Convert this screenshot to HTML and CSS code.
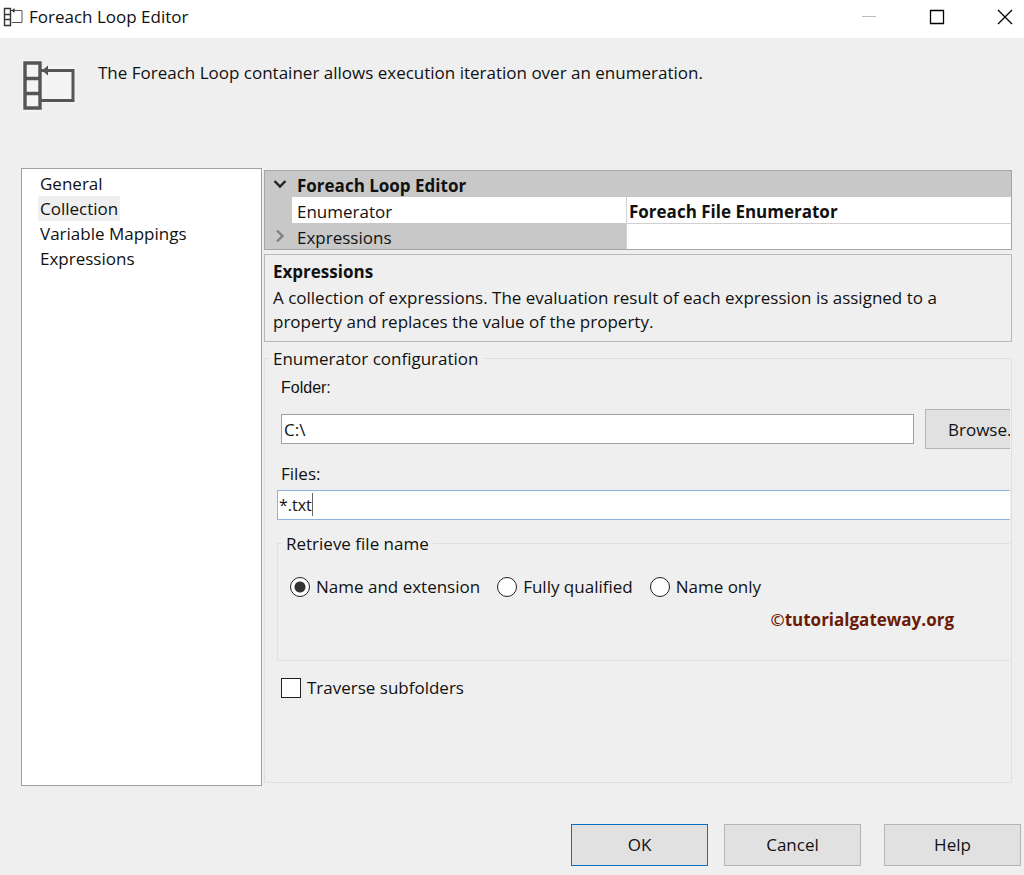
FILE: index.html
```
<!DOCTYPE html>
<html lang="en">
<head>
    <meta charset="utf-8">
    <title>Foreach Loop Editor</title>
    <link rel="stylesheet" href="styles.css">
</head>
<body>
    <div class="titlebar">
        <svg class="title-icon" width="20" height="20" viewBox="0 0 20 20" fill="none" stroke="#333">
            <path d="M1.5 1.5h6v17h-6zM1.5 7.5h6M1.5 12.5h6" stroke-width="1.4"/>
            <path d="M8 3.500h11v12H9" stroke="#555"/>
            <path d="M8.500 3.500l3-2.500v5z" fill="#333" stroke="none"/>
        </svg>
        <h1>Foreach Loop Editor</h1>
        <div class="window-buttons">
            <button type="button" aria-label="Minimize" disabled>
                <svg width="16" height="16" viewBox="0 0 16 16" stroke="#bbb"><path d="M1 7.5h14"/></svg>
            </button>
            <button type="button" aria-label="Maximize">
                <svg width="16" height="16" viewBox="0 0 16 16" fill="none" stroke="#000"><path d="M1.5 1.5h13v13h-13z" stroke-width="1.3"/></svg>
            </button>
            <button type="button" aria-label="Close">
                <svg width="16" height="16" viewBox="0 0 16 16" stroke="#000"><path d="M1 1l14 14M15 1L1 15" stroke-width="1.3"/></svg>
            </button>
        </div>
    </div>

    <div class="intro">
        <svg width="54" height="52" viewBox="0 0 54 52" fill="none" stroke="#555" stroke-width="3">
            <path d="M0 0h20v6h34v37H20v9H0z" fill="#f4f4f4" stroke="none"/>
            <path d="M3 3h15v45H3zM3 18.500h15M3 33.500h15" stroke-width="3.4"/>
            <path d="M18 10.500h33v30H18"/>
            <path d="M20 10.500l6-5v10z" fill="#555" stroke="none"/>
        </svg>
        <p>The Foreach Loop container allows execution iteration over an enumeration.</p>
    </div>

    <div class="main">
        <ul class="pages">
            <li><a href="#">General</a></li>
            <li><a href="#" class="selected">Collection</a></li>
            <li><a href="#">Variable Mappings</a></li>
            <li><a href="#">Expressions</a></li>
        </ul>

        <div class="content">
            <table class="properties">
                <colgroup>
                    <col class="col-gutter">
                    <col class="col-name">
                    <col>
                </colgroup>
                <tr class="category">
                    <td class="gutter">
                        <svg width="14" height="10" viewBox="0 0 14 10" fill="none" stroke="#222" stroke-width="2.4"><path d="M1.500 2l5.500 5.500L12.500 2"/></svg>
                    </td>
                    <th colspan="2">Foreach Loop Editor</th>
                </tr>
                <tr>
                    <td class="gutter"></td>
                    <td>Enumerator</td>
                    <td class="value">Foreach File Enumerator</td>
                </tr>
                <tr class="current">
                    <td class="gutter">
                        <svg width="10" height="14" viewBox="0 0 10 14" fill="none" stroke="#808080" stroke-width="2.4"><path d="M2 1.500l5.500 5.500L2 12.500"/></svg>
                    </td>
                    <td class="name">Expressions</td>
                    <td class="value"></td>
                </tr>
            </table>

            <div class="description">
                <h2>Expressions</h2>
                <p>A collection of expressions. The evaluation result of each expression is assigned to a property and replaces the value of the property.</p>
            </div>

            <fieldset class="config">
                <legend>Enumerator configuration</legend>
                <div class="config-body">
                    <label class="folder-label" for="folder">Folder:</label>
                    <div class="folder-row">
                        <input type="text" id="folder" value="C:\">
                        <button type="button" class="btn browse">Browse.</button>
                    </div>
                    <label class="files-label" for="files">Files:</label>
                    <div class="files-row">
                        <input type="text" id="files" value="*.txt">
                        <span class="caret"></span>
                    </div>

                    <fieldset class="retrieve">
                        <legend>Retrieve file name</legend>
                        <div class="options">
                            <label><input type="radio" name="retrieve" checked>Name and extension</label>
                            <label><input type="radio" name="retrieve">Fully qualified</label>
                            <label><input type="radio" name="retrieve">Name only</label>
                        </div>
                        <p class="credit"><span>©</span>tutorialgateway.org</p>
                    </fieldset>

                    <label class="traverse"><input type="checkbox">Traverse subfolders</label>
                </div>
            </fieldset>
        </div>
    </div>

    <div class="footer">
        <button type="button" class="btn default">OK</button>
        <button type="button" class="btn">Cancel</button>
        <button type="button" class="btn help">Help</button>
    </div>
</body>
</html>
```
FILE: styles.css
```
* {
    box-sizing: border-box;
}

body {
    margin: 0;
    min-height: 100vh;
    display: flex;
    flex-direction: column;
    background-color: #efefef;
    color: #111;
    font-family: "Open Sans", "Noto Sans", sans-serif;
    font-size: 17px;
    line-height: 25px;
}

h1, h2, p, ul, fieldset {
    margin: 0;
    padding: 0;
    font-size: 17px;
}

h1 {
    font-weight: normal;
}

button, input {
    font-family: inherit;
    font-size: 17px;
    color: #111;
}

.titlebar {
    display: flex;
    align-items: center;
    height: 38px;
    padding: 0 11px 5px 3px;
    background-color: #fff;
}

.title-icon {
    margin-right: 6px;
}

.window-buttons {
    display: flex;
    gap: 52px;
    margin-left: auto;
}

.window-buttons button {
    display: flex;
    padding: 0;
    border: none;
    background: none;
}

.intro {
    display: flex;
    gap: 22px;
    height: 130px;
    padding: 22px 22px 0;
}

.main {
    flex: 1;
    display: flex;
    gap: 2px;
    padding: 0 12px 0 21px;
}

.pages {
    width: 241px;
    padding: 2px 16px;
    border: 1px solid #a0a0a0;
    background-color: #fff;
    list-style: none;
}

.pages a {
    display: inline-block;
    padding: 0 2px;
    color: #111;
    text-decoration: none;
}

.pages li {
    height: 25px;
}

.pages .selected {
    background-color: #efefef;
}

.content {
    flex: 1;
    min-width: 0;
    display: flex;
    flex-direction: column;
    padding: 2px 0 3px;
}

.properties {
    width: 100%;
    border: 1px solid #a6a6a6;
    border-spacing: 0;
    table-layout: fixed;
    background-color: #fff;
}

.col-gutter {
    width: 27px;
}

.col-name {
    width: 334px;
}

.properties td,
.properties th {
    height: 26px;
    padding: 3px 5px 0;
    line-height: 23px;
    text-align: left;
}

.properties .gutter {
    padding: 0 0 0 3px;
}

.gutter svg {
    display: block;
    margin: auto;
}

.gutter,
.category th,
.current .name {
    background-color: #c8c8c8;
}

.properties .value {
    padding-left: 2px;
    border-left: 1px solid #d0d0d0;
    font-weight: bold;
}

.current .value {
    border-top: 1px solid #d0d0d0;
}

.description {
    min-height: 88px;
    margin-top: 4px;
    padding: 5px 8px;
    border: 1px solid #b8b8b8;
    line-height: 24px;
}

.description p {
    margin-top: 2px;
}

.config {
    flex: 1;
    min-width: 0;
    margin-top: 4px;
    border: 1px solid #e0e0e0;
}

.config legend {
    margin-left: 4px;
    padding: 0 4px;
}

.config-body {
    margin-right: 1px;
    padding-left: 12px;
    overflow: hidden;
}

.folder-label,
.files-label {
    display: block;
    padding-left: 4px;
}

.folder-label {
    margin-top: 4px;
    font-family: "Liberation Sans", sans-serif;
    font-size: 16px;
}

.folder-row {
    display: flex;
    align-items: center;
    gap: 11px;
    margin: 9px 0 12px;
    padding-left: 4px;
}

input[type="text"] {
    height: 30px;
    padding: 0 2px;
    border: 1px solid #a0a0a0;
    border-radius: 0;
    background-color: #fff;
}

.folder-row input {
    flex: 1;
    min-width: 0;
}

.btn {
    width: 137px;
    height: 42px;
    padding: 0;
    border: 1px solid #b4b4b4;
    background-color: #e1e1e1;
}

/* the button runs past the edge of the panel */
.browse {
    flex: none;
    height: 40px;
    width: 127px;
    margin-right: -42px;
    padding-left: 22px;
    text-align: left;
}

.files-row {
    position: relative;
    margin-top: 4px;
}

.files-row #files {
    display: block;
    width: calc(100% + 2px);
    padding-left: 1px;
    border-color: #8fb2dc;
    font-size: 16px;
}

.caret {
    position: absolute;
    top: 3px;
    left: 35px;
    width: 1px;
    height: 23px;
    background-color: #666;
}

.retrieve {
    height: 130px;
    margin: 11px -2px 0 0;
    border: 1px solid #e0e0e0;
}

.options {
    display: flex;
    gap: 17px;
    margin-top: 18px;
    padding-left: 12px;
}

.options label,
.traverse {
    display: flex;
    align-items: center;
    gap: 6px;
}

input[type="radio"],
input[type="checkbox"] {
    appearance: none;
    width: 20px;
    height: 20px;
    margin: 0;
    border: 1px solid #222;
    background-color: #fff;
}

input[type="radio"] {
    border-radius: 50%;
}

input[type="radio"]:checked {
    background-image: radial-gradient(circle, #333 5px, #fff 6px);
}

.credit {
    margin-top: 8px;
    padding-right: 57px;
    color: #6b1a05;
    font-weight: bold;
    text-align: right;
}

.credit span {
    font-weight: 600;
}

.traverse {
    margin-top: 14px;
    padding-left: 4px;
}

.footer {
    display: flex;
    justify-content: flex-end;
    gap: 16px;
    padding: 38px 3px 9px;
}

.footer .btn {
    padding-bottom: 1px;
}

.default {
    border-color: #0a6fc8;
}

.help {
    margin-left: 7px;
}
```
